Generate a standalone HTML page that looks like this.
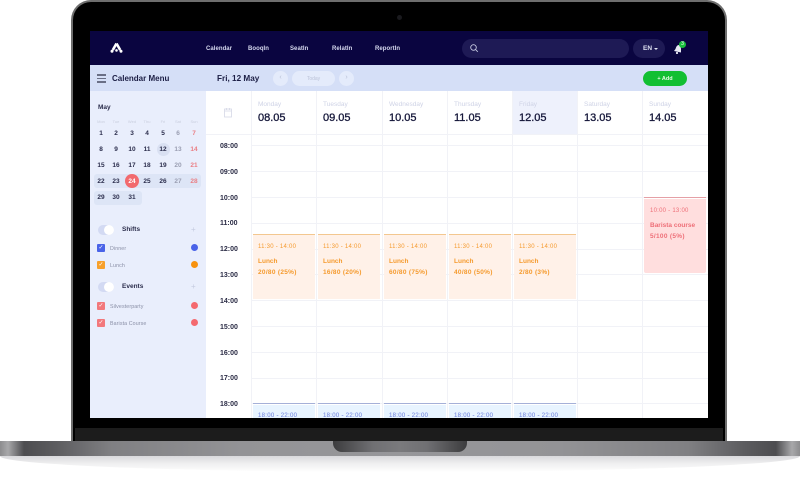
<!DOCTYPE html>
<html><head><meta charset="utf-8">
<style>
*{box-sizing:border-box;margin:0;padding:0}
html,body{width:800px;height:480px;overflow:hidden;background:#fff}
body{position:relative;font-family:"Liberation Sans",sans-serif;color:#1a1a3a}
#w{position:absolute;left:0;top:0;width:800px;height:480px;filter:blur(.3px)}
.a{position:absolute;white-space:nowrap}
.nav{top:44.5px;font-size:6px;font-weight:bold;color:#d5d8ee;line-height:8px;letter-spacing:.05px}
.dow{top:101px;font-size:6.5px;color:#cfd3e6;line-height:8px}
.dt{top:110.5px;font-size:11px;color:#15173a;line-height:14px;-webkit-text-stroke:.3px #15173a}
.hl{left:206px;width:502px;height:1px;background:#f1f2f7}
.vl{top:91px;width:1px;height:327px;background:#f1f2f7}
.tm{left:220px;font-size:7px;font-weight:bold;color:#2a2b45;line-height:8px}
.mh{top:119px;font-size:4px;color:#c9cede;line-height:5px;width:16px;text-align:center}
.d{font-size:6.5px;font-weight:bold;color:#2b2d4c;width:16px;text-align:center;line-height:8px}
.g{color:#9a9eb2}.r{color:#ea7f85}
.ev{background:#fff1e8;border-top:1px solid #f3c78f;color:#f59a2d;font-weight:bold;top:234px;height:65px;width:62px}
.ev b{position:absolute;left:5px;white-space:nowrap;font-size:6.5px;line-height:8px}
.ev b.t{font-size:6px;font-weight:normal;letter-spacing:.25px;top:8px}
.ev b.n{top:34px;letter-spacing:.3px}
.bl{background:linear-gradient(#fff 1px,#e8f4ff 1px);border-top:1px solid #a5b0d8;top:403px;height:15px;width:62px;overflow:hidden;color:#7a8de0;font-size:6px}
.bl span{position:absolute;left:5px;top:8px;line-height:8px;white-space:nowrap;letter-spacing:.3px;-webkit-text-stroke:.1px #7a8de0}
.lb{font-size:5.3px;color:#8a8fa6;line-height:6px;left:110px;letter-spacing:.1px}
.sh{font-size:6.5px;font-weight:bold;color:#2b2d4c;left:122px;line-height:8px}
.cb{left:97px;width:8px;height:8px;border-radius:1px;color:#fff;font-size:6px;line-height:8px;text-align:center}
.dot{left:191px;width:7px;height:7px;border-radius:50%}
.tg{left:98px;width:16px;height:10px;border-radius:5px;background:#d3daf3}
.tg i{position:absolute;right:0;top:0;width:10px;height:10px;border-radius:50%;background:#fff}
.pl{left:191px;font-size:8px;color:#c5cbe0;line-height:8px}
</style></head><body><div id="w">

<!-- laptop lid -->
<div class="a" style="left:71px;top:0;width:656px;height:442px;background:#6e6e6e;border-radius:20px 20px 0 0"></div>
<div class="a" style="left:73px;top:2px;width:652px;height:439px;background:#000;border-radius:18px 18px 0 0"></div>
<div class="a" style="left:75px;top:428px;width:648px;height:13px;background:#1c1c1c"></div>
<div class="a" style="left:397px;top:15px;width:5px;height:5px;border-radius:50%;background:#1a1a1e"></div>

<!-- base -->
<div class="a" style="left:0;top:441px;width:800px;height:15px;background:linear-gradient(90deg,#8c8c8e 0,#a8a8aa 1%,#4d4d50 3%,#5c5c5f 7%,#808083 14%,#939396 30%,#97979a 50%,#939396 70%,#808083 86%,#5c5c5f 93%,#4d4d50 97%,#a8a8aa 99%,#8c8c8e 100%)"></div>
<div class="a" style="left:0;top:456px;width:800px;height:16px;background:linear-gradient(180deg,#d9d9dc 0,#f0f0f1 50%,#fafafa 85%,#fff 100%);border-radius:0 0 50% 50% / 0 0 100% 100%"></div>
<div class="a" style="left:333px;top:441px;width:134px;height:11px;border-radius:0 0 9px 9px;background:linear-gradient(90deg,#3c3c3e 0,#707073 30%,#7a7a7d 50%,#707073 70%,#3c3c3e 100%)"></div>

<!-- screen -->
<div class="a" style="left:90px;top:31px;width:618px;height:387px;background:#fff;overflow:hidden"></div>

<!-- top bar -->
<div class="a" style="left:90px;top:31px;width:618px;height:34px;background:#0a0540"></div>
<svg class="a" style="left:110px;top:41px" width="13" height="13" viewBox="0 0 13 13"><path d="M6.5 2.5 L2.8 9 M6.5 2.5 L10.2 9" stroke="#fff" stroke-width="2.6" fill="none"/><circle cx="2" cy="10.2" r="1.5" fill="#fff"/><circle cx="11" cy="10.2" r="1.5" fill="#fff"/><circle cx="6.5" cy="9.4" r="1.3" fill="#fff"/></svg>
<div class="a nav" style="left:206px">Calendar</div>
<div class="a nav" style="left:248px">BooqIn</div>
<div class="a nav" style="left:290px">SeatIn</div>
<div class="a nav" style="left:332px">RelatIn</div>
<div class="a nav" style="left:375px">ReportIn</div>
<div class="a" style="left:462px;top:39px;width:167px;height:19px;border-radius:10px;background:#1e1a55"></div>
<svg class="a" style="left:469px;top:43px" width="10" height="10" viewBox="0 0 10 10"><circle cx="4.5" cy="4.5" r="2.8" stroke="#c5c8e0" fill="none" stroke-width=".9"/><path d="M6.6 6.6 L8.8 8.8" stroke="#c5c8e0" stroke-width=".9"/></svg>
<div class="a" style="left:633px;top:39px;width:32px;height:19px;border-radius:10px;background:#1e1a55"></div>
<div class="a" style="left:643px;top:45px;font-size:6.5px;font-weight:bold;color:#dfe2f2;line-height:8px">EN</div>
<div class="a" style="left:654px;top:48px;width:0;height:0;border-left:2px solid transparent;border-right:2px solid transparent;border-top:2.5px solid #dfe2f2"></div>
<svg class="a" style="left:673px;top:44px" width="10" height="10" viewBox="0 0 10 10"><path d="M5.5 1 C3.5 1.5 3 3.5 2.5 5 L1 7 L8 8.5 L8 6 C8.2 4 7.5 1.5 5.5 1Z" fill="#e8e9f4"/><circle cx="4" cy="9" r="1.1" fill="#e8e9f4"/></svg>
<div class="a" style="left:679px;top:41px;width:7px;height:7px;border-radius:50%;background:#17c03a;color:#fff;font-size:5px;line-height:7px;text-align:center">3</div>

<!-- sub bar -->
<div class="a" style="left:90px;top:65px;width:618px;height:26px;background:#d5dff7"></div>
<div class="a" style="left:97px;top:74px;width:9px;height:1.5px;background:#6a6f86"></div>
<div class="a" style="left:97px;top:77.5px;width:9px;height:1.5px;background:#6a6f86"></div>
<div class="a" style="left:97px;top:81px;width:9px;height:1.5px;background:#6a6f86"></div>
<div class="a" style="left:112px;top:73.5px;font-size:8px;font-weight:bold;color:#1c1e45;line-height:10px">Calendar Menu</div>
<div class="a" style="left:217px;top:74px;font-size:8.2px;font-weight:bold;color:#1c1e45;line-height:10px">Fri, 12 May</div>
<div class="a" style="left:273px;top:71px;width:15px;height:15px;border-radius:50%;background:#e4ebfb;color:#b9c0d6;font-size:7px;line-height:14px;text-align:center">‹</div>
<div class="a" style="left:292px;top:71px;width:43px;height:15px;border-radius:8px;background:#e4ebfb;color:#bcc3d9;font-size:5px;line-height:16px;text-align:center">Today</div>
<div class="a" style="left:339px;top:71px;width:15px;height:15px;border-radius:50%;background:#e4ebfb;color:#b9c0d6;font-size:7px;line-height:14px;text-align:center">›</div>
<div class="a" style="left:643px;top:71px;width:44px;height:15px;border-radius:8px;background:#12bf32;color:#eafbe9;font-size:5.5px;font-weight:bold;line-height:16px;text-align:center">+ Add</div>

<!-- sidebar -->
<div class="a" style="left:90px;top:91px;width:116px;height:327px;background:#e9eefc"></div>
<div class="a" style="left:98px;top:104px;font-size:6.5px;font-weight:bold;color:#2b2d4c;line-height:8px">May</div>
<div class="a mh" style="left:93px">Mon</div><div class="a mh" style="left:108px">Tue</div><div class="a mh" style="left:124px">Wed</div><div class="a mh" style="left:139px">Thu</div><div class="a mh" style="left:155px">Fri</div><div class="a mh" style="left:170px">Sat</div><div class="a mh" style="left:186px">Sun</div>

<div class="a" style="left:94px;top:174px;width:107px;height:14px;background:#dde5f6;border-radius:3px"></div>
<div class="a" style="left:94px;top:191px;width:48px;height:14px;background:#dde5f6;border-radius:3px"></div>
<div class="a" style="left:157px;top:143px;width:13px;height:13px;border-radius:50%;background:#d9e0f2"></div>
<div class="a" style="left:125px;top:174px;width:14px;height:14px;border-radius:50%;background:#f26a6e"></div>

<div class="a d" style="left:93px;top:129.5px">1</div><div class="a d" style="left:108px;top:129.5px">2</div><div class="a d" style="left:124px;top:129.5px">3</div><div class="a d" style="left:139px;top:129.5px">4</div><div class="a d" style="left:155px;top:129.5px">5</div><div class="a d g" style="left:170px;top:129.5px">6</div><div class="a d r" style="left:186px;top:129.5px">7</div>
<div class="a d" style="left:93px;top:145.5px">8</div><div class="a d" style="left:108px;top:145.5px">9</div><div class="a d" style="left:124px;top:145.5px">10</div><div class="a d" style="left:139px;top:145.5px">11</div><div class="a d" style="left:155px;top:145.5px">12</div><div class="a d g" style="left:170px;top:145.5px">13</div><div class="a d r" style="left:186px;top:145.5px">14</div>
<div class="a d" style="left:93px;top:161.5px">15</div><div class="a d" style="left:108px;top:161.5px">16</div><div class="a d" style="left:124px;top:161.5px">17</div><div class="a d" style="left:139px;top:161.5px">18</div><div class="a d" style="left:155px;top:161.5px">19</div><div class="a d g" style="left:170px;top:161.5px">20</div><div class="a d r" style="left:186px;top:161.5px">21</div>
<div class="a d" style="left:93px;top:177.5px">22</div><div class="a d" style="left:108px;top:177.5px">23</div><div class="a d" style="left:124px;top:177.5px;color:#fff">24</div><div class="a d" style="left:139px;top:177.5px">25</div><div class="a d" style="left:155px;top:177.5px">26</div><div class="a d g" style="left:170px;top:177.5px">27</div><div class="a d r" style="left:186px;top:177.5px">28</div>
<div class="a d" style="left:93px;top:193.5px">29</div><div class="a d" style="left:108px;top:193.5px">30</div><div class="a d" style="left:124px;top:193.5px">31</div>

<div class="a tg" style="top:225px"><i></i></div>
<div class="a sh" style="top:226px">Shifts</div>
<div class="a pl" style="top:226px">+</div>
<div class="a cb" style="top:244px;background:#4a63e8">✓</div>
<div class="a lb" style="top:245.5px">Dinner</div>
<div class="a dot" style="top:244px;background:#4a63e8"></div>
<div class="a cb" style="top:261px;background:#f7a02c">✓</div>
<div class="a lb" style="top:262.5px">Lunch</div>
<div class="a dot" style="top:261px;background:#f7920f"></div>
<div class="a tg" style="top:282px"><i></i></div>
<div class="a sh" style="top:282.5px">Events</div>
<div class="a pl" style="top:283px">+</div>
<div class="a cb" style="top:302px;background:#f2787c">✓</div>
<div class="a lb" style="top:303.5px">Silvesterparty</div>
<div class="a dot" style="top:302px;background:#f4696f"></div>
<div class="a cb" style="top:319px;background:#f2787c">✓</div>
<div class="a lb" style="top:320.5px">Barista Course</div>
<div class="a dot" style="top:319px;background:#f4696f"></div>

<!-- grid -->
<div class="a" style="left:512px;top:91px;width:65px;height:43px;background:#eef1fc"></div>
<div class="a hl" style="top:134px"></div>
<div class="a hl" style="left:251px;width:457px;top:145px"></div>
<div class="a hl" style="left:251px;width:457px;top:171px"></div>
<div class="a hl" style="left:251px;width:457px;top:197px"></div>
<div class="a hl" style="left:251px;width:457px;top:223px"></div>
<div class="a hl" style="left:251px;width:457px;top:249px"></div>
<div class="a hl" style="left:251px;width:457px;top:274px"></div>
<div class="a hl" style="left:251px;width:457px;top:300px"></div>
<div class="a hl" style="left:251px;width:457px;top:326px"></div>
<div class="a hl" style="left:251px;width:457px;top:352px"></div>
<div class="a hl" style="left:251px;width:457px;top:378px"></div>
<div class="a hl" style="left:251px;width:457px;top:403px"></div>
<div class="a vl" style="left:251px"></div><div class="a vl" style="left:316px"></div><div class="a vl" style="left:382px"></div><div class="a vl" style="left:447px"></div><div class="a vl" style="left:512px"></div><div class="a vl" style="left:577px"></div><div class="a vl" style="left:642px"></div>

<svg class="a" style="left:223px;top:107px" width="10" height="11" viewBox="0 0 10 11"><rect x="1.5" y="2" width="7" height="8" stroke="#d5d8e6" fill="none" stroke-width=".8"/><path d="M1.5 4H8.5M3.5 1V3M6.5 1V3" stroke="#d5d8e6" stroke-width=".8"/></svg>

<div class="a dow" style="left:258px">Monday</div><div class="a dt" style="left:258px">08.05</div>
<div class="a dow" style="left:323px">Tuesday</div><div class="a dt" style="left:323px">09.05</div>
<div class="a dow" style="left:389px">Wednesday</div><div class="a dt" style="left:389px">10.05</div>
<div class="a dow" style="left:454px">Thursday</div><div class="a dt" style="left:454px">11.05</div>
<div class="a dow" style="left:519px">Friday</div><div class="a dt" style="left:519px">12.05</div>
<div class="a dow" style="left:584px">Saturday</div><div class="a dt" style="left:584px">13.05</div>
<div class="a dow" style="left:649px">Sunday</div><div class="a dt" style="left:649px">14.05</div>

<div class="a tm" style="top:142.5px">08:00</div>
<div class="a tm" style="top:168.5px">09:00</div>
<div class="a tm" style="top:194.5px">10:00</div>
<div class="a tm" style="top:220px">11:00</div>
<div class="a tm" style="top:246px">12:00</div>
<div class="a tm" style="top:272px">13:00</div>
<div class="a tm" style="top:297.5px">14:00</div>
<div class="a tm" style="top:323.5px">15:00</div>
<div class="a tm" style="top:349.5px">16:00</div>
<div class="a tm" style="top:375px">17:00</div>
<div class="a tm" style="top:400.5px">18:00</div>

<!-- lunch -->
<div class="a ev" style="left:253px"><b class="t">11:30 - 14:00</b><b style="top:23px">Lunch</b><b class="n">20/80 (25%)</b></div>
<div class="a ev" style="left:318px"><b class="t">11:30 - 14:00</b><b style="top:23px">Lunch</b><b class="n">16/80 (20%)</b></div>
<div class="a ev" style="left:384px"><b class="t">11:30 - 14:00</b><b style="top:23px">Lunch</b><b class="n">60/80 (75%)</b></div>
<div class="a ev" style="left:449px"><b class="t">11:30 - 14:00</b><b style="top:23px">Lunch</b><b class="n">40/80 (50%)</b></div>
<div class="a ev" style="left:514px"><b class="t">11:30 - 14:00</b><b style="top:23px">Lunch</b><b class="n">2/80 (3%)</b></div>

<!-- barista -->
<div class="a ev" style="left:644px;top:197px;height:76px;background:linear-gradient(#fff 1px,#ffdede 1px);border-top:1px solid #e5a0a6;color:#ee6f78;border-radius:0 0 2px 2px"><b class="t" style="left:6px;top:9px">10:00 - 13:00</b><b style="left:6px;top:24px">Barista course</b><b class="n" style="left:6px;top:35px">5/100 (5%)</b></div>

<!-- dinner -->
<div class="a bl" style="left:253px"><span>18:00 - 22:00</span></div>
<div class="a bl" style="left:318px"><span>18:00 - 22:00</span></div>
<div class="a bl" style="left:384px"><span>18:00 - 22:00</span></div>
<div class="a bl" style="left:449px"><span>18:00 - 22:00</span></div>
<div class="a bl" style="left:514px"><span>18:00 - 22:00</span></div>
</div></body></html>
